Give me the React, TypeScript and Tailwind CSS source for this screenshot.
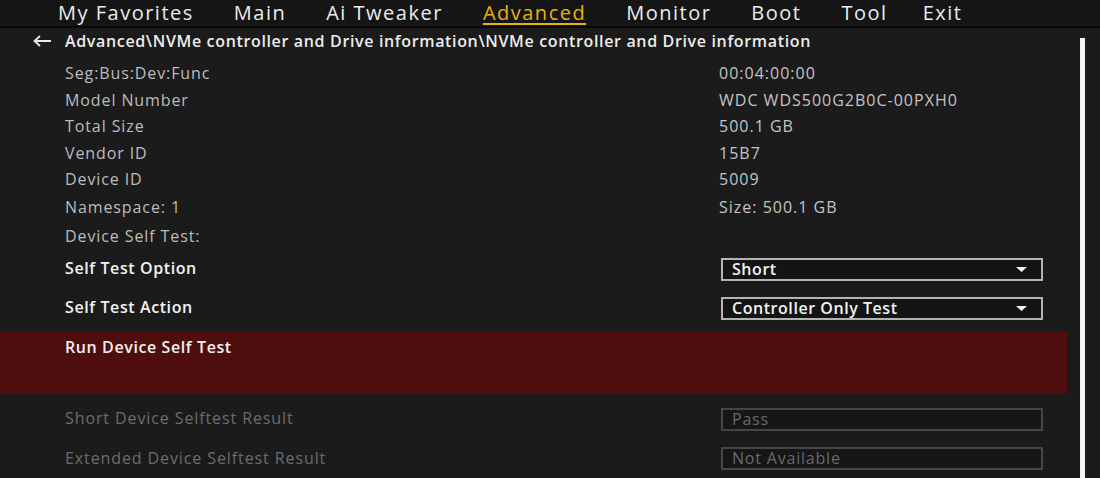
import React from "react";

const tabs = ["My Favorites", "Main", "Ai Tweaker", "Advanced", "Monitor", "Boot", "Tool", "Exit"];

const info: { label: string; value: string; h: string }[] = [
  { label: "Seg:Bus:Dev:Func", value: "00:04:00:00", h: "h-[27px]" },
  { label: "Model Number", value: "WDC WDS500G2B0C-00PXH0", h: "h-[26px]" },
  { label: "Total Size", value: "500.1 GB", h: "h-[27px]" },
  { label: "Vendor ID", value: "15B7", h: "h-[26px]" },
  { label: "Device ID", value: "5009", h: "h-[27px]" },
  { label: "Namespace: 1", value: "Size: 500.1 GB", h: "h-[28px]" },
  { label: "Device Self Test:", value: "", h: "h-[30px]" },
];

function Caret() {
  return (
    <svg width="11" height="5" viewBox="0 0 11 5" className="shrink-0">
      <path d="M0 0 H11 L5.5 5 Z" fill="#f2f2f2" />
    </svg>
  );
}

function Dropdown({ value }: { value: string }) {
  return (
    <div className="w-[322px] h-[23px] border-2 border-[#b4b4b4] bg-[#141414] flex items-center justify-between pl-[9px] pr-[14px]">
      <span className="text-[16px] tracking-[0.55px] font-semibold text-[#f2f2f2] leading-none pb-[2px]">{value}</span>
      <Caret />
    </div>
  );
}

function DimBox({ value }: { value: string }) {
  return (
    <div className="w-[322px] h-[23px] border-2 border-[#464646] bg-[#161616] flex items-center pl-[9px]">
      <span className="text-[16px] tracking-[0.8px] text-[#6a6a6a] leading-none pb-[2px]">{value}</span>
    </div>
  );
}

export default function App() {
  return (
    <div
      className="w-[1100px] h-[478px] overflow-hidden bg-[#1b1b1b] flex flex-col"
      style={{ fontFamily: '"Open Sans", "Noto Sans", sans-serif' }}
    >
      {/* Top menu */}
      <div className="h-[28px] shrink-0 bg-[#151515] border-b-2 border-[#070707] flex items-center pl-[58px] gap-[40px]">
        {tabs.map((t) => (
          <span
            key={t}
            className={
              t === "Advanced"
                ? "text-[20px] tracking-[1.5px] font-medium leading-[24px] text-[#e8b20c] underline decoration-2 underline-offset-[3px]"
                : t === "Exit"
                ? "text-[20px] tracking-[1.5px] font-medium leading-[24px] text-[#ececec] -ml-[5px]"
                : "text-[20px] tracking-[1.5px] font-medium leading-[24px] text-[#ececec]"
            }
          >
            {t}
          </span>
        ))}
      </div>

      <div className="flex flex-1 min-h-0">
        <div className="w-[1067px] shrink-0 flex flex-col">
          {/* Breadcrumb */}
          <div className="h-[27px] flex items-center pl-[33px]">
            <svg width="19" height="12" viewBox="0 0 19 12" className="mr-[13px]">
              <path d="M18 6 H2 M7 1 L1.5 6 L7 11" stroke="#ececec" strokeWidth="1.8" fill="none" />
            </svg>
            <span className="text-[16px] tracking-[0.65px] font-semibold text-[#ececec]">
              Advanced\NVMe controller and Drive information\NVMe controller and Drive information
            </span>
          </div>
          <div className="h-[5px]" />

          {info.map((r) => (
            <div key={r.label} className={`${r.h} grid grid-cols-[719px_1fr] items-center`}>
              <span className="pl-[65px] text-[16px] tracking-[0.9px] text-[#bcbcbc]">{r.label}</span>
              <span className="text-[16px] tracking-[1px] text-[#c4c4c4]">{r.value}</span>
            </div>
          ))}

          <div className="h-[39px] grid grid-cols-[721px_1fr] items-center">
            <span className="pl-[65px] pb-[4px] text-[16px] tracking-[0.6px] font-semibold text-[#f2f2f2]">Self Test Option</span>
            <Dropdown value="Short" />
          </div>
          <div className="h-[39px] grid grid-cols-[721px_1fr] items-center">
            <span className="pl-[65px] pb-[4px] text-[16px] tracking-[0.6px] font-semibold text-[#f2f2f2]">Self Test Action</span>
            <Dropdown value="Controller Only Test" />
          </div>
          <div className="h-[4px]" />

          <div className="h-[62px] bg-[#4e0e0e] pl-[65px] pt-[3px]">
            <span className="text-[16px] tracking-[0.6px] font-semibold text-[#f2f2f2]">Run Device Self Test</span>
          </div>
          <div className="h-[6px]" />

          <div className="h-[39px] grid grid-cols-[721px_1fr] items-center">
            <span className="pl-[65px] pb-[4px] text-[16px] tracking-[0.9px] font-medium text-[#6c6c6c]">Short Device Selftest Result</span>
            <DimBox value="Pass" />
          </div>
          <div className="h-[39px] grid grid-cols-[721px_1fr] items-center">
            <span className="pl-[65px] pb-[2px] text-[16px] tracking-[0.9px] font-medium text-[#6c6c6c]">Extended Device Selftest Result</span>
            <DimBox value="Not Available" />
          </div>
        </div>

        {/* Scrollbar */}
        <div className="flex-1 pl-[13px] pt-[10px]">
          <div className="w-[5px] h-full bg-[#f4f4f4]" />
        </div>
      </div>
    </div>
  );
}
